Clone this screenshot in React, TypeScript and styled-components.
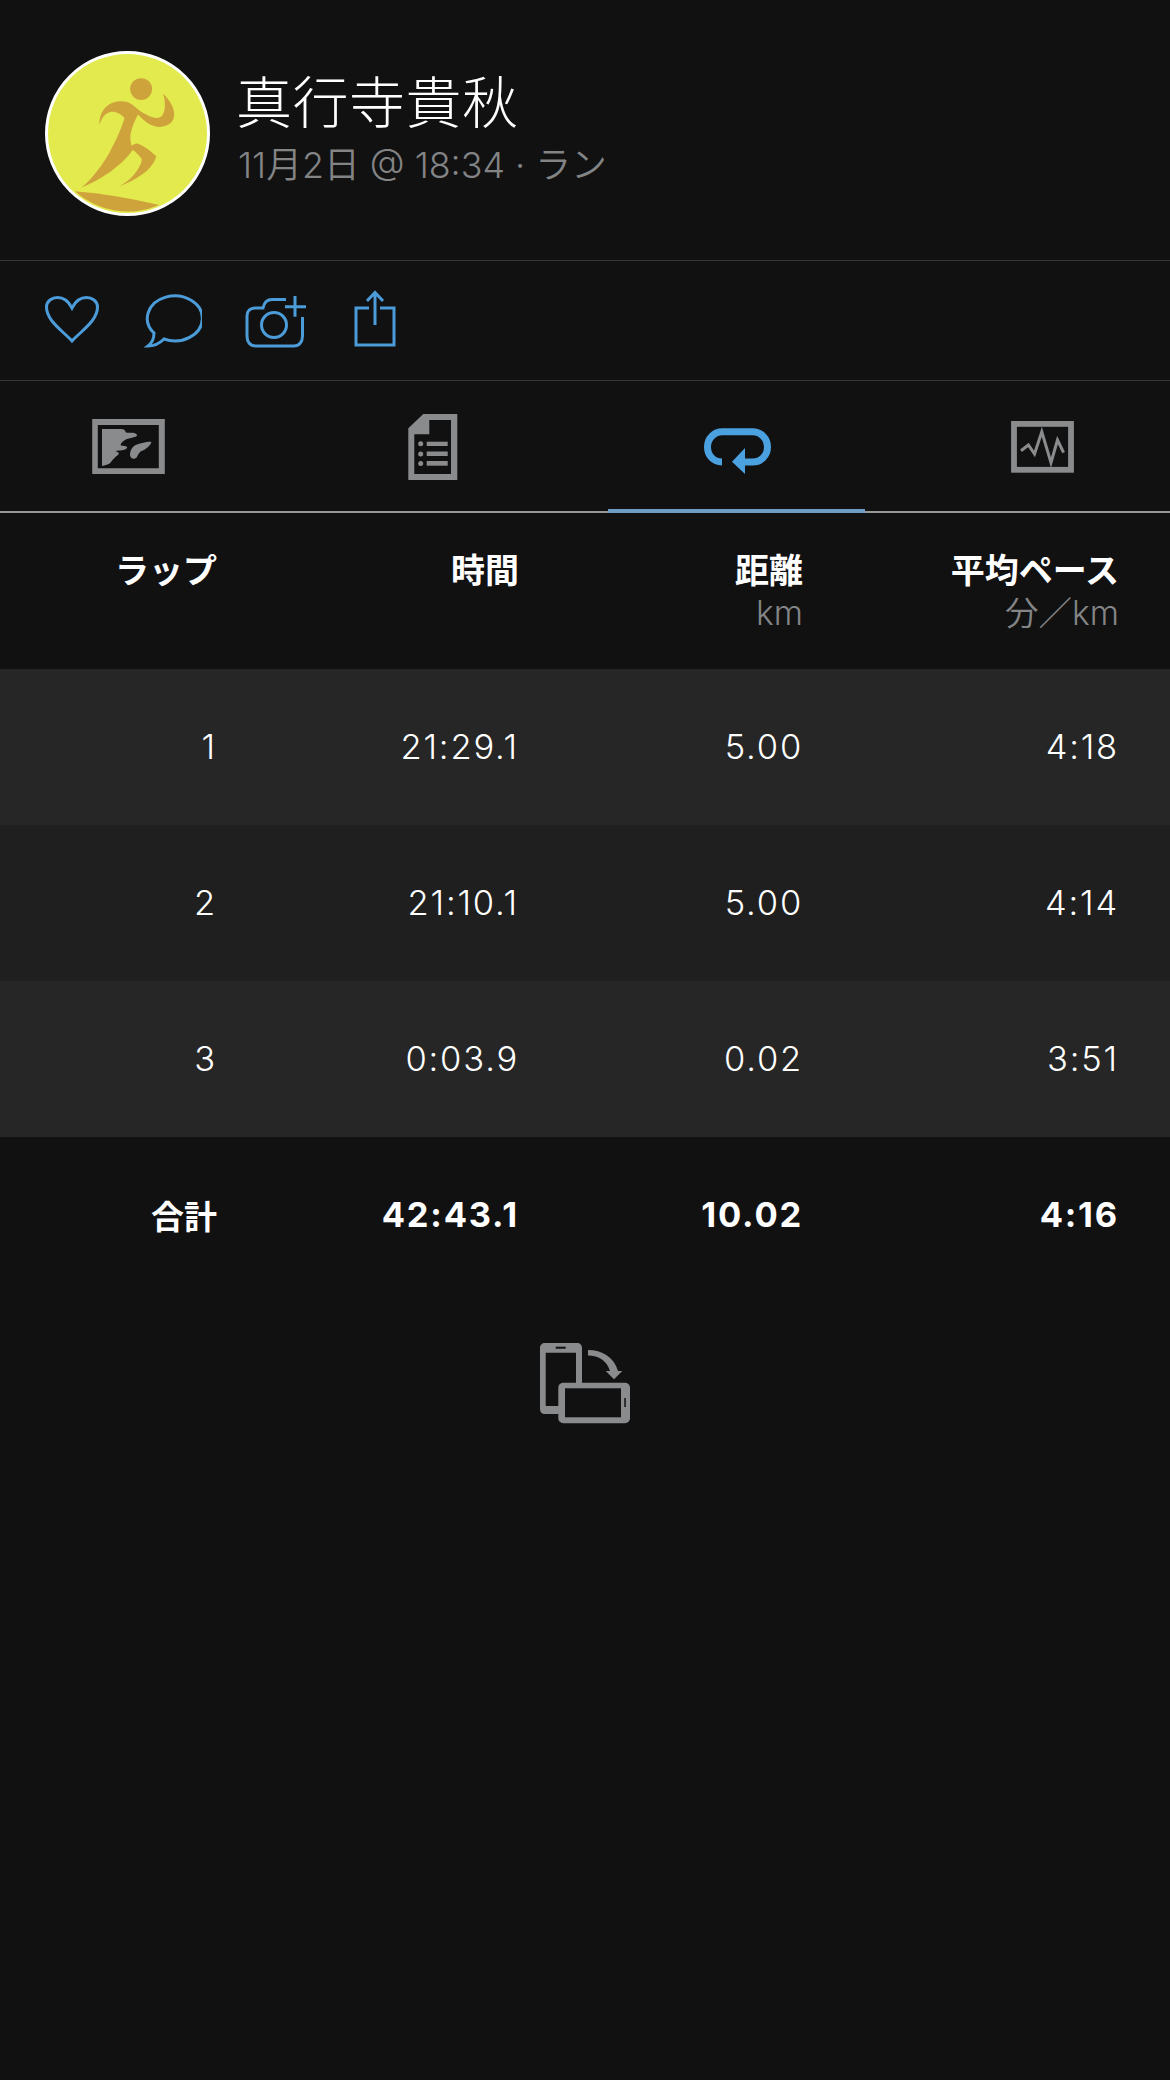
import styled, { createGlobalStyle } from 'styled-components'

const GlobalStyle = createGlobalStyle`
	html, body {
		margin: 0;
		padding: 0;
		background: #111112;
	}
	body {
		font-family: Inter, "Noto Sans CJK JP", sans-serif;
		color: #ffffff;
	}
`

const Page = styled.div`
	width: 1170px;
	height: 2080px;
	background: #111112;
	overflow: hidden;
`

const Header = styled.header`
	height: 261px;
	box-sizing: border-box;
	padding: 51px 0 0 45px;
	display: flex;
	gap: 26px;
	border-bottom: 1px solid #38393a;
`

const Avatar = styled.svg`
	width: 165px;
	height: 165px;
	flex: none;
`

const Who = styled.div`
	padding-top: 14px;
`

const Name = styled.h1`
	margin: 0;
	font-family: "Noto Sans CJK JP", sans-serif;
	font-size: 56px;
	line-height: 68px;
	font-weight: 300;
	letter-spacing: 0.5px;
`

const Meta = styled.p`
	margin: 10px 0 0 2px;
	font-family: Inter, "Noto Sans CJK JP", sans-serif;
	font-size: 35.8px;
	line-height: 44px;
	font-weight: 350;
	color: #838485;
`

const Actions = styled.div`
	height: 120px;
	box-sizing: border-box;
	padding-left: 45px;
	display: flex;
	align-items: flex-start;
	border-bottom: 1px solid #38393a;
`

const ActionIcon = styled.svg<{ $w: number; $left: number; $top: number }>`
	width: ${(p) => p.$w}px;
	height: 60px;
	margin-left: ${(p) => p.$left}px;
	margin-top: ${(p) => p.$top}px;
	flex: none;
	fill: none;
	stroke: #4b9cd8;
	stroke-width: 3;
`

const Tabs = styled.nav`
	height: 132px;
	box-sizing: border-box;
	display: grid;
	grid-template-columns: repeat(4, 257px);
	column-gap: 47px;
	border-bottom: 2px solid #98999a;
`

const Tab = styled.div<{ $active?: boolean }>`
	height: 132px;
	box-sizing: border-box;
	padding-top: 38px;
	display: flex;
	justify-content: center;
	align-items: flex-start;
	border-bottom: 4px solid ${(p) => (p.$active ? '#6f9cc4' : 'transparent')};
`

const TabIcon = styled.svg`
	width: 90px;
	height: 62px;
	display: block;
	overflow: visible;
`

const Row = styled.div<{ $bg?: string; $h?: number; $top?: number }>`
	display: grid;
	grid-template-columns: 217px 302px 284px 316px;
	height: ${(p) => p.$h ?? 156}px;
	box-sizing: border-box;
	padding-top: ${(p) => p.$top ?? 57}px;
	background: ${(p) => p.$bg ?? 'transparent'};
`

const Cell = styled.div<{ $bold?: boolean }>`
	text-align: right;
	font-size: 34.5px;
	line-height: 42px;
	letter-spacing: 1.8px;
	font-weight: ${(p) => (p.$bold ? 700 : 350)};
	color: #ffffff;
`

const Head = styled.div`
	text-align: right;
	font-family: "Noto Sans CJK JP", sans-serif;
	font-size: 34px;
	line-height: 44px;
	font-weight: 700;
	color: #ffffff;
`

const Unit = styled.div`
	margin-top: 3px;
	text-align: right;
	font-family: Inter, "Noto Sans CJK JP", sans-serif;
	font-size: 33.5px;
	line-height: 38px;
	font-weight: 350;
	color: #838485;
`

const TotalLabel = styled(Cell)`
	font-family: "Noto Sans CJK JP", sans-serif;
	font-size: 33px;
	letter-spacing: 0;
`

const RotateWrap = styled.div`
	display: flex;
	justify-content: center;
	padding-top: 50px;
`

const RotateIcon = styled.svg`
	width: 90px;
	height: 81px;
	display: block;
	overflow: visible;
`

const laps = [
	{ lap: '1', time: '21:29.1', dist: '5.00', pace: '4:18', bg: '#262627' },
	{ lap: '2', time: '21:10.1', dist: '5.00', pace: '4:14', bg: '#1f1f20' },
	{ lap: '3', time: '0:03.9', dist: '0.02', pace: '3:51', bg: '#262627' },
]

const GREY = '#8a8b8c'
const BG = '#111112'

export default function App() {
	return (
		<Page>
			<GlobalStyle />
			<Header>
				<Avatar viewBox="0 0 166 166">
					<circle cx="83" cy="83" r="81.500" fill="#e2ea4e" stroke="#ffffff" strokeWidth="3" />
					<g fill="#cfa33c">
						<circle cx="96.700" cy="38.300" r="11" />
						<path d="M55 74C54 62 62 52 73 50.700C79 50 84 51 88 54C93 58 97 62 102 64C107 67 112 68 115 67C121 65 122 54 119 43C125 49 130 56 130 64C130 71 125 76 115 76.500C108 76.500 101 72 93.500 64C90 71 87 78 86 84C85.500 90 86.500 95 88.500 99C80 112 60 128 36.700 137.300C48 128 58 114 65 102C71 91 77 78 80 67.500C76 63 70 60 65 61.700C60 63 57 68 55 74z" />
						<path d="M85 97C87 95 90 93 93 93C99 95 106 100 112 106C109 115 104 120 98 124C91 129 83 133 75 136C84 131 90 125 94 118C97 113 98 110 97 108C95 105 90 100 85 97z" />
						<path d="M30 141Q70 144 115 155A80 80 0 0 1 30 141z" />
					</g>
				</Avatar>
				<Who>
					<Name>真行寺貴秋</Name>
					<Meta>11月2日 @ 18:34 · ラン</Meta>
				</Who>
			</Header>

			<Actions>
				<ActionIcon $w={56} $left={0} $top={32} viewBox="0 0 56 60">
					<path d="M27 48C18 38 1.500 28 1.500 14C1.500 8 7 4.500 12.500 4.500C19 4.500 24 9 27 15C30 9 35 4.500 41.500 4.500C47 4.500 52.500 8 52.500 14C52.500 28 36 38 27 48z" />
				</ActionIcon>
				<ActionIcon $w={60} $left={41} $top={31} viewBox="0 0 60 60">
					<path d="M12 41A27.500 22.500 0 1 1 22 47C18 51 12 54 6 54C10 51 12 46 12 41z" />
				</ActionIcon>
				<ActionIcon $w={62} $left={43} $top={33} viewBox="0 0 62 60">
					<path d="M41 5.500H27C21 5.500 19 9 18 14H10C5 14 2 17 2 22V42C2 48 5 52 11 52H49C54 52 57.500 48 57.500 42V23" />
					<circle cx="29" cy="31" r="12.500" />
					<path d="M40 12.700H61M50 2V22.700" />
				</ActionIcon>
				<ActionIcon $w={42} $left={47} $top={29} viewBox="0 0 42 60">
					<path d="M15 18H2V55H40V18H26M21 35V2M13 11L21 2.500L29 11" />
				</ActionIcon>
			</Actions>

			<Tabs>
				<Tab>
					<TabIcon viewBox="0 0 90 62">
						<path d="M8.200 0H80.800V55H8.200zM13.800 6V49.300H74.800V6z" fill={GREY} fillRule="evenodd" />
						<path d="M18 10H37C40 10 41 11 42 13.500C46 14 52 13 53 16C53 19 46 18 41 21C38 23 36 25 37 26.500C40 27 44 27 43 29C41 32 35 31 31.500 32C34 33 36 34 34 36C31 38 29 40 27 43C25 46 21 46 18 47z" fill={GREY} />
						<path d="M67.500 23C64 22 58 24 53 25.500C48 27 46 32 46 36C46 40 51 41 53 38C55 34 56 32 60 31C63 29 66 27 67.500 23z" fill={GREY} />
					</TabIcon>
				</Tab>
				<Tab>
					<TabIcon viewBox="0 0 90 62">
						<path d="M35.300-5H69.300V61H20.300V9.300zM41.300 1V15.300H26.300V55H63V1z" fill={GREY} fillRule="evenodd" />
						<g fill={GREY}>
							<circle cx="32.700" cy="24.700" r="2.500" />
							<circle cx="32.700" cy="35" r="2.500" />
							<circle cx="32.700" cy="44.500" r="2.500" />
							<rect x="38.700" y="22.700" width="21" height="4.300" />
							<rect x="38.700" y="32.500" width="21" height="4.500" />
							<rect x="38.700" y="42" width="21" height="4.700" />
						</g>
					</TabIcon>
				</Tab>
				<Tab $active>
					<TabIcon viewBox="0 0 90 62">
						<path d="M30 43C21.500 43 15.500 36.500 15.500 28C15.500 19.500 22 12.800 30.500 12.800H60.500C69 12.800 75.500 19.500 75.500 28C75.500 36.500 69 43 60.500 43H50" fill="none" stroke="#4ba1e0" strokeWidth="7" />
						<path d="M53 29V55L40 42.700z" fill="#4ba1e0" />
					</TabIcon>
				</Tab>
				<Tab>
					<TabIcon viewBox="0 0 90 62">
						<rect x="18" y="4.900" width="57" height="45.900" fill="none" stroke={GREY} strokeWidth="5.800" />
						<path d="M25 31.700L32.400 26L38.500 35L45.800 12.700L55 43.700L61.500 21L67.600 33.700" fill="none" stroke={GREY} strokeWidth="3" />
					</TabIcon>
				</Tab>
			</Tabs>

			<Row $h={156} $top={34}>
				<Head>ラップ</Head>
				<Head>時間</Head>
				<div>
					<Head>距離</Head>
					<Unit>km</Unit>
				</div>
				<div>
					<Head>平均ペース</Head>
					<Unit>分／km</Unit>
				</div>
			</Row>

			{laps.map((l) => (
				<Row key={l.lap} $bg={l.bg}>
					<Cell>{l.lap}</Cell>
					<Cell>{l.time}</Cell>
					<Cell>{l.dist}</Cell>
					<Cell>{l.pace}</Cell>
				</Row>
			))}

			<Row>
				<TotalLabel $bold>合計</TotalLabel>
				<Cell $bold>42:43.1</Cell>
				<Cell $bold>10.02</Cell>
				<Cell $bold>4:16</Cell>
			</Row>

			<RotateWrap>
				<RotateIcon viewBox="0 0 90 81">
					<path d="M5 0H37C40 0 42 2 42 5V45H5.700V63H20V71H5C2 71 0 69 0 66V5C0 2 2 0 5 0zM5.700 9.700V45H36V9.700z" fill={GREY} fillRule="evenodd" />
					<rect x="15.700" y="3.700" width="10" height="2" fill={BG} />
					<rect x="18.300" y="39.700" width="71.700" height="40.600" rx="5" fill={GREY} />
					<rect x="25" y="45.300" width="56" height="29" fill={BG} />
					<rect x="84.300" y="55" width="1.500" height="9" fill={BG} />
					<path d="M48 7C62 7 74 14 78 28H82.300L74 36.300L65.700 28H70C67 18 59 12.500 48 12.500z" fill={GREY} />
				</RotateIcon>
			</RotateWrap>
		</Page>
	)
}
